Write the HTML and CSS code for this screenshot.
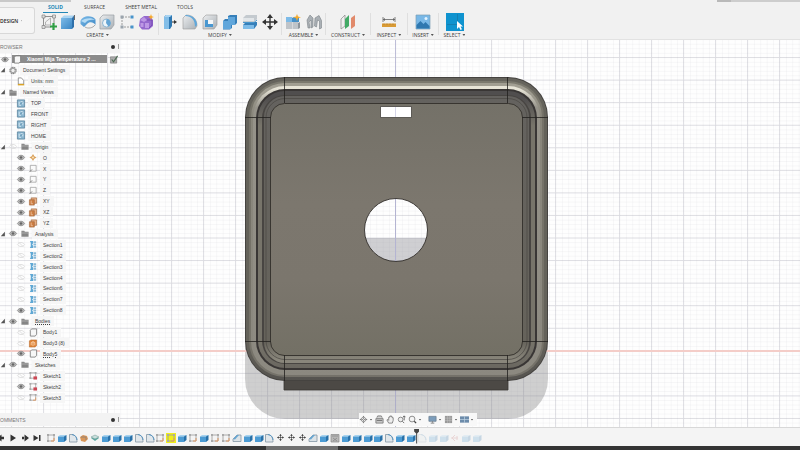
FILE: index.html
```html
<!DOCTYPE html>
<html lang="en">
<head>
<meta charset="utf-8">
<title>Xiaomi Mija Temperature 2</title>
<link rel="stylesheet" href="styles.css">
</head>
<body>
<svg class="defs" aria-hidden="true">
  <defs>
    <linearGradient id="blue" x1="0" y1="0" x2="1" y2="1"><stop offset="0" stop-color="#7dbbe8"/><stop offset="1" stop-color="#3b86c4"/></linearGradient>
    <linearGradient id="grey" x1="0" y1="0" x2="1" y2="1"><stop offset="0" stop-color="#eceef0"/><stop offset="1" stop-color="#a9afb4"/></linearGradient>
  </defs>
  <!-- ribbon -->
  <symbol id="r-sketch" viewBox="0 0 16 16"><path d="M2 2.500h11M2.500 2v11M2 13h8M13 3v6" fill="none" stroke="#777" stroke-width=".8"/><path d="M4.500 11V8l5-4v7z" fill="none" stroke="#999" stroke-width=".7"/><path d="M1 1h3v3H1zM11.500 1h3v3h-3zM1 11.500h3v3H1z" fill="#ddd" stroke="#777" stroke-width=".6"/><path d="M12.500 9v7M9 12.500h7" stroke="#2f9e44" stroke-width="2.200"/></symbol>
  <symbol id="r-extrude" viewBox="0 0 16 16"><path d="M1 4l3-2.500h10L12 4z" fill="#a9d4f2"/><path d="M12 4l2-2.500V13l-2 2z" fill="#2f70aa"/><path d="M1 4h11v11H1z" fill="url(#blue)"/><path d="M14.500 1v5" stroke="#444" stroke-width=".8"/></symbol>
  <symbol id="r-revolve" viewBox="0 0 16 16"><path d="M.5 7C2 1.500 12 .500 15.500 5.500V11c-2-3.500-6-3.500-8-1.500L4 13 .5 10z" fill="url(#blue)"/><path d="M1 7c3-3 11-4 14-1-4-1-8 0-10 3z" fill="#b4dbf5"/><path d="M5 13c3 2 8 1 10-2" fill="none" stroke="#888" stroke-width=".7"/></symbol>
  <symbol id="r-hole" viewBox="0 0 16 16"><path d="M1 4l3-3h11v10l-3 4H1z" fill="url(#grey)" stroke="#9a9fa3" stroke-width=".7"/><circle cx="7.500" cy="9" r="4" fill="#edf5fa" stroke="#78a9cb" stroke-width=".8"/><path d="M7.500 5a4 4 0 0 1 2 7.500L7 9z" fill="#63a4d4"/></symbol>
  <symbol id="r-pattern" viewBox="0 0 16 16"><path d="M3 3h10M3 3v10h10" fill="none" stroke="#888" stroke-width=".8" stroke-dasharray="2 1"/><path d="M1.500 1.500h3v3h-3zM1.500 11.500h3v3h-3z" fill="#9aa4ad"/><path d="M11.500 1.500h3v3h-3zM11.500 11.500h3v3h-3z" fill="#4794cc"/></symbol>
  <symbol id="r-form" viewBox="0 0 16 16"><path d="M2 5l4-3h6l3 4v6l-4 3.500H4L1 12z" fill="#9569ce"/><path d="M2 6l4-3 3 3-3 2zM2.500 9h3v4h-3zM7 9h4v5H7z" fill="#bd98e5"/><path d="M9 6h5v5l-3 3" fill="none" stroke="#6f43aa" stroke-width=".7"/><path d="M13 0l.8 2.200L16 3l-2.200.8L13 6l-.8-2.200L10 3l2.200-.8z" fill="#f7a928"/></symbol>
  <symbol id="r-press" viewBox="0 0 16 16"><path d="M2 3l2-2h6v11l-2 3H2z" fill="#2e78b3"/><path d="M2 3h5v12H2z" fill="#83bee8"/><path d="M2 3l2-2h6L8 3z" fill="#a9d4f2"/><path d="M10 8h3" stroke="#333"/><path d="M12 6l3 2-3 2z" fill="#333"/></symbol>
  <symbol id="r-fillet" viewBox="0 0 16 16"><path d="M1 4l3-3c7 0 11 4 11 11l-2 3H1z" fill="url(#grey)" stroke="#999" stroke-width=".6"/><path d="M3 2c7 0 10 4 10 11l2-2C15 5 10 1 4 1z" fill="#5ea7db"/></symbol>
  <symbol id="r-shell" viewBox="0 0 16 16"><path d="M1 4l3-3h11v10l-3 4H1z" fill="url(#grey)" stroke="#999" stroke-width=".6"/><path d="M3 6h8v7H3z" fill="#f4f7f9"/><path d="M3 6h3v4h5v3H3z" fill="#4997d0"/></symbol>
  <symbol id="r-combine" viewBox="0 0 16 16"><path d="M6 2l2-1h7v8l-2 2h-3v3l-2 1.500H1V7l2-2h3z" fill="#367fb9"/><path d="M6 3h7v8H9v4H1V7h5z" fill="#60a6db"/></symbol>
  <symbol id="r-split" viewBox="0 0 16 16"><path d="M1 4l3-3h11v4l-3 3H1z" fill="#c4cacf"/><path d="M1 4h11v3H1z" fill="#e2e6e9"/><path d="M1 11l3-3h11v3l-3 4H1z" fill="#367fb9"/><path d="M1 11h11v4H1z" fill="#7dbbe8"/><path d="M1 8.500h11l3-2.500" fill="none" stroke="#4896cd"/></symbol>
  <symbol id="r-move" viewBox="0 0 16 16"><path d="M8 2v12M2 8h12" stroke="#333" stroke-width="1.400"/><path d="M8 0l3 4H5zM8 16l3-4H5zM0 8l4-3v6zM16 8l-4-3v6z" fill="#333"/></symbol>
  <symbol id="r-component" viewBox="0 0 16 16"><path d="M1 3h6v5H1z" fill="#7dbbe8"/><path d="M1 8h6v7H1zM7.500 8H13v7H7.500z" fill="#bfc4c9"/><path d="M7 4l2-1h5v5H7z" fill="#4691c9"/><path d="M13 9l2-1v6l-2 1z" fill="#8e959b"/><path d="M12 0l1 2.500 3 .8-3 1L12 7l-1-2.700-3-1 3-.8z" fill="#f5ab2e"/></symbol>
  <symbol id="r-joint" viewBox="0 0 16 16"><path d="M2 14L1 6l3-5 3 3v9l-2 1V6L3 8l1 6zM9 4l4-2.500 2.500 5V14l-2 1V7l-2-1-1 7-2-1z" fill="#aab0b5" stroke="#7c8388" stroke-width=".6"/></symbol>
  <symbol id="r-construct" viewBox="0 0 16 16"><path d="M1 5l4-4v11l-4 3z" fill="#f0f0f0" stroke="#888" stroke-width=".7"/><path d="M5 5l4-4v11l-4 3z" fill="#43aa66"/><path d="M11 4l4-3v11l-4 3z" fill="#e18a6b"/></symbol>
  <symbol id="r-inspect" viewBox="0 0 16 16"><path d="M2 3v5M14 3v5M2 5.500h12" stroke="#666" stroke-width=".8"/><path d="M2 5.500l2-1.500v3zM14 5.500l-2-1.500v3z" fill="#666"/><path d="M1 9.500h14V13H1z" fill="#d99b35"/><path d="M3 9.500v1.500M6 9.500v1.500M9 9.500v1.500M12 9.500v1.500" stroke="#b07a25" stroke-width=".6"/></symbol>
  <symbol id="r-insert" viewBox="0 0 16 16"><path d="M1 1h14v14H1z" fill="#79b8e7" stroke="#7d9db4" stroke-width=".7"/><path d="M1.500 11l4-4 3 3 2-2 4 4v2.500h-13z" fill="#2f78b0"/><circle cx="11" cy="4.500" r="1.500" fill="#e4f4ff"/></symbol>
  <symbol id="r-select" viewBox="0 0 18 18"><path d="M0 0h18v18H0z" fill="#0f93cf"/><path d="M1 11.500h10M11.500 1v8" stroke="#1877a3" stroke-width=".7"/><path d="M11 8v8l2-2 1.500 3 1.500-.8-1.500-2.700H17z" fill="#fff"/></symbol>
  <!-- tree -->
  <symbol id="eye" viewBox="0 0 10 10"><path d="M1 5c2-3.300 6-3.300 8 0-2 3.300-6 3.300-8 0z" fill="#b9b9b9" stroke="#888" stroke-width=".9"/><circle cx="5" cy="5" r="1.500" fill="#666"/></symbol>
  <symbol id="eye-off" viewBox="0 0 10 10"><path d="M1 5c2-3 6-3 8 0-2 3-6 3-8 0zM2 2l6 6" fill="none" stroke="#dadada" stroke-width=".9"/></symbol>
  <symbol id="caret" viewBox="0 0 6 8"><path d="M5.500 1v6H0z" fill="#555"/></symbol>
  <symbol id="gear" viewBox="0 0 10 10"><circle cx="5" cy="5" r="3.400" fill="none" stroke="#777" stroke-width="1.300" stroke-dasharray="1.600 .5"/><circle cx="5" cy="5" r="2.400" fill="#eee" stroke="#888" stroke-width=".8"/></symbol>
  <symbol id="units" viewBox="0 0 10 10"><path d="M2 8V1h3.500L8 4v4z" fill="#fff" stroke="#777" stroke-width=".8"/><path d="M1.500 8.500h7" stroke="#d9a326" stroke-width="1.600"/></symbol>
  <symbol id="folder" viewBox="0 0 10 10"><path d="M1 2h3l1 1h4v5.500H1z" fill="#8b8b8b"/><path d="M1 4.500h8" stroke="#c9c9c9" stroke-width=".6"/><path d="M3 5v3M5 5v3M7 5v3" stroke="#777" stroke-width=".5"/></symbol>
  <symbol id="view" viewBox="0 0 10 10"><path d="M1 1h8v8H1z" fill="#8bb6d0" stroke="#527c97" stroke-width=".8"/><path d="M3 3v4h2M4.500 3H7v3" fill="none" stroke="#e3f1f9" stroke-width=".9"/><path d="M4 6l3-3" stroke="#3c6d8c" stroke-width=".6"/></symbol>
  <symbol id="point" viewBox="0 0 10 10"><path d="M5 1l1.500 2.500L9 5 6.500 6.500 5 9 3.500 6.500 1 5l2.500-1.500z" fill="#d9a15c"/><circle cx="5" cy="5" r="1.200" fill="#f8dfb7"/></symbol>
  <symbol id="axis" viewBox="0 0 10 10"><path d="M2 1.500h6.500V8H2z" fill="#fafafa" stroke="#999" stroke-width=".8"/><path d="M1 9l3-3" stroke="#777"/></symbol>
  <symbol id="plane" viewBox="0 0 10 10"><path d="M3 1h6v6H3z" fill="#e8b188" stroke="#9b6339" stroke-width=".7"/><path d="M1 3h5.500v6H1z" fill="#cd7e43" stroke="#9b6339" stroke-width=".6"/><path d="M3 4v3.500h2" fill="none" stroke="#f5d2b5" stroke-width=".7"/></symbol>
  <symbol id="section" viewBox="0 0 10 10"><path d="M1.500 1H5v3L4 5l1 1v3H1.500l1-2V3z" fill="#5ea8d5"/><path d="M5.500 1.500h3v2h-3zM5.500 4.200h3v1.600h-3zM5.500 6.500h3v2h-3z" fill="#8bb9d6"/></symbol>
  <symbol id="body" viewBox="0 0 10 10"><path d="M2 2.500L3.500 1H9v6L7.500 9H2z" fill="#f7f7f7" stroke="#777" stroke-width=".9"/></symbol>
  <symbol id="mesh" viewBox="0 0 10 10"><path d="M1 2l2-1h6v6L7.500 9H1z" fill="#de8437" stroke="#a95716" stroke-width=".5"/><path d="M3 7V4l2-1 2 1v3M5 3v5" fill="none" stroke="#ffe2c6" stroke-width=".8"/></symbol>
  <symbol id="sketch" viewBox="0 0 10 10"><path d="M2 2h6v6H2z" fill="none" stroke="#999" stroke-width=".8"/><path d="M1 1h2v2H1zM7 1h2v2H7zM1 7h2v2H1z" fill="#aaa"/><path d="M8 5v3H5" fill="none" stroke="#e09a65"/></symbol>
  <symbol id="sketch-lock" viewBox="0 0 10 10"><path d="M2 2h6v6H2z" fill="none" stroke="#999" stroke-width=".8"/><path d="M1 1h2v2H1zM7 1h2v2H7zM1 7h2v2H1z" fill="#aaa"/><path d="M5.500 6h4v3.500h-4z" fill="#cc4855"/></symbol>
  <symbol id="check" viewBox="0 0 10 10"><path d="M1 2h7v7H1z" fill="#aaa" stroke="#777" stroke-width=".7"/><path d="M2.500 5l2 2.500L9 1" fill="none" stroke="#4d6b54" stroke-width="1.300"/></symbol>
  <!-- timeline -->
  <symbol id="t-ext" viewBox="0 0 10 10"><path d="M1 3.500L3 2h6.500L7.500 3.500z" fill="#a6d3f0"/><path d="M7 3.500L9.500 2v5L7 9z" fill="#2770a8"/><path d="M1 3.500h6V9H1z" fill="#4c9bd3"/></symbol>
  <symbol id="t-fil" viewBox="0 0 10 10"><path d="M1.500 9V1.500H4C7 2 9 4 9 9z" fill="#e1e7eb" stroke="#8395a3" stroke-width=".8"/><path d="M4 1.500C7 2 9 4 9 7" fill="none" stroke="#5895c2"/></symbol>
  <symbol id="t-cha" viewBox="0 0 10 10"><path d="M1 8.500V6l4-4h4v6.500z" fill="#dce3e7" stroke="#8395a3" stroke-width=".8"/><path d="M1 6l4-4h2L3 6.500z" fill="#65a6d3"/></symbol>
  <symbol id="t-ball" viewBox="0 0 10 10"><path d="M1 4l3-2 4 1 1 3-3 3-4-1z" fill="#d99658"/><path d="M2 4h5v3" fill="none" stroke="#89817b" stroke-width=".8"/></symbol>
  <symbol id="t-plane" viewBox="0 0 10 10"><path d="M1 5l4-2 4 2-4 3z" fill="#5ba8a0"/><path d="M1 4l4-2 4 2-4 2z" fill="#c9dfdc" stroke="#6c9490" stroke-width=".5"/></symbol>
  <symbol id="t-box" viewBox="0 0 10 10"><path d="M1 1.500h8v7.500H1z" fill="#b8b8b8" stroke="#888" stroke-width=".7"/><path d="M2 3h6M3 5l4 3M3 8l4-3" stroke="#777" stroke-width=".6"/></symbol>
  <symbol id="t-red" viewBox="0 0 10 10"><path d="M1 5h7M5 2L2 5l3 3M7 3v4" fill="none" stroke="#c56d6d"/></symbol>
  <symbol id="t-play" viewBox="0 0 10 10"><path d="M2.500 1.500v7L8 5z" fill="#333"/></symbol>
  <symbol id="t-next" viewBox="0 0 10 10"><path d="M4.500 1.500v7L9 5zM2 3.700h3v2.600H2z" fill="#333"/></symbol>
  <symbol id="t-prev" viewBox="0 0 10 10"><path d="M5.500 1.500v7L1 5zM5 3.700h3v2.600H5z" fill="#333"/></symbol>
  <symbol id="t-end" viewBox="0 0 10 10"><path d="M1.500 2v6L6.500 5zM7 2h1.500v6H7z" fill="#333"/></symbol>
  <!-- view controls -->
  <symbol id="n-orbit" viewBox="0 0 10 10"><path d="M5 1v8M1 5h8" stroke="#777" stroke-width=".7"/><path d="M5 1.500L8.500 5 5 8.500 1.500 5z" fill="none" stroke="#666" stroke-width=".8"/><circle cx="5" cy="5" r="1" fill="#fff" stroke="#555" stroke-width=".6"/></symbol>
  <symbol id="n-look" viewBox="0 0 10 10"><path d="M2 3l1-2h4l1 2M1 4h8v5H1z" fill="#c7c7c7" stroke="#777" stroke-width=".9"/><path d="M2 6h6" stroke="#666"/></symbol>
  <symbol id="n-pan" viewBox="0 0 10 10"><path d="M3 9L1 5.500l1-.5 1 1V2.500h1V1.500h1V1h1v1h1v1h1V6L7 9z" fill="#eee" stroke="#666" stroke-width=".8"/></symbol>
  <symbol id="n-zoom" viewBox="0 0 10 10"><circle cx="4" cy="5" r="2.600" fill="#eee" stroke="#666" stroke-width=".8"/><path d="M6 7l2 2M8 1v5M6.500 2.500L8 1l1.500 1.500" fill="none" stroke="#555" stroke-width=".9"/></symbol>
  <symbol id="n-fit" viewBox="0 0 10 10"><circle cx="4.500" cy="4.500" r="3.200" fill="#f4f4f4" stroke="#666" stroke-width=".8"/><path d="M7 7l2 2" stroke="#444" stroke-width="1.400"/></symbol>
  <symbol id="n-display" viewBox="0 0 10 10"><path d="M1 1.500h8V7H1z" fill="#7c9dbb" stroke="#6b7f90" stroke-width=".8"/><path d="M5 7v1.500M3 9h4" stroke="#777"/></symbol>
  <symbol id="n-grid" viewBox="0 0 10 10"><path d="M1 1h8v8H1z" fill="#999"/><path d="M1 3.500h8M1 6h8M4 1v8M6.500 1v8" stroke="#c9c9c9" stroke-width=".5"/></symbol>
  <symbol id="n-port" viewBox="0 0 10 10"><path d="M0 1.500h10v7H0z" fill="#6d8cab"/><path d="M5 1.500v7M0 5h10" stroke="#c8dae8" stroke-width=".7"/></symbol>
</svg>

<div class="app">
  <header class="top">
    <button class="workspace-switch"><span>DESIGN</span><i class="drop"></i></button>
    <div class="ribbon">
      <nav class="tabs">
        <a href="#solid" class="tab tab-active">SOLID</a>
        <a href="#surface" class="tab tab-surface">SURFACE</a>
        <a href="#sheet" class="tab tab-sheet">SHEET METAL</a>
        <a href="#tools" class="tab">TOOLS</a>
      </nav>
      <div class="groups">
        <section class="group create">
          <div class="tools"><svg><use href="#r-sketch"/></svg><svg><use href="#r-extrude"/></svg><svg><use href="#r-revolve"/></svg><svg><use href="#r-hole"/></svg><svg><use href="#r-pattern"/></svg><svg><use href="#r-form"/></svg></div>
          <button class="menu">CREATE<i class="drop"></i></button>
        </section>
        <section class="group modify">
          <div class="tools"><svg><use href="#r-press"/></svg><svg><use href="#r-fillet"/></svg><svg><use href="#r-shell"/></svg><svg><use href="#r-combine"/></svg><svg><use href="#r-split"/></svg><svg><use href="#r-move"/></svg></div>
          <button class="menu">MODIFY<i class="drop"></i></button>
        </section>
        <section class="group assemble">
          <div class="tools"><svg><use href="#r-component"/></svg><svg><use href="#r-joint"/></svg></div>
          <button class="menu">ASSEMBLE<i class="drop"></i></button>
        </section>
        <section class="group construct">
          <div class="tools"><svg><use href="#r-construct"/></svg></div>
          <button class="menu">CONSTRUCT<i class="drop"></i></button>
        </section>
        <section class="group inspect">
          <div class="tools"><svg><use href="#r-inspect"/></svg></div>
          <button class="menu">INSPECT<i class="drop"></i></button>
        </section>
        <section class="group insert">
          <div class="tools"><svg><use href="#r-insert"/></svg></div>
          <button class="menu">INSERT<i class="drop"></i></button>
        </section>
        <section class="group select">
          <div class="tools"><svg><use href="#r-select"/></svg></div>
          <button class="menu">SELECT<i class="drop"></i></button>
        </section>
      </div>
    </div>
  </header>

  <main class="stage">
    <svg class="canvas" viewBox="0 40 800 387" preserveAspectRatio="xMidYMin slice">
      <defs>
        <pattern id="minor" x="11.500" y="57.300" width="6.400" height="4.510" patternUnits="userSpaceOnUse"><path d="M0 0h6.400M0 0v4.510" stroke="#9999a8" stroke-opacity=".16" stroke-width=".9" fill="none"/></pattern>
        <pattern id="major" x="11" y="57" width="32" height="22.560" patternUnits="userSpaceOnUse"><path d="M0 .5h32M.5 0v22.560" stroke="#77778a" stroke-opacity=".2" fill="none"/></pattern>
        <linearGradient id="floor" x1="0" y1="0" x2="0" y2="1"><stop offset="0" stop-color="#747168"/><stop offset=".4" stop-color="#7c776e"/><stop offset=".7" stop-color="#7b766d"/><stop offset="1" stop-color="#737065"/></linearGradient>
        <linearGradient id="g1" gradientUnits="userSpaceOnUse" x1="0" y1="77" x2="0" y2="381"><stop offset="0" stop-color="#66645d"/><stop offset=".13" stop-color="#64625a"/><stop offset=".87" stop-color="#64625a"/><stop offset="1" stop-color="#55534f"/></linearGradient>
        <linearGradient id="g2" gradientUnits="userSpaceOnUse" x1="0" y1="77" x2="0" y2="381"><stop offset="0" stop-color="#7c7a6f"/><stop offset=".13" stop-color="#757268"/><stop offset=".87" stop-color="#757268"/><stop offset="1" stop-color="#75726a"/></linearGradient>
        <linearGradient id="g3" gradientUnits="userSpaceOnUse" x1="0" y1="77" x2="0" y2="381"><stop offset="0" stop-color="#a19e92"/><stop offset=".04" stop-color="#a19e92"/><stop offset=".13" stop-color="#88857a"/><stop offset="1" stop-color="#8c8980"/></linearGradient>
        <linearGradient id="g4" gradientUnits="userSpaceOnUse" x1="0" y1="77" x2="0" y2="381"><stop offset="0" stop-color="#ebe8dc"/><stop offset=".04" stop-color="#e6e3d6"/><stop offset=".1" stop-color="#96938a"/><stop offset="1" stop-color="#8c8980"/></linearGradient>
        <linearGradient id="g5" gradientUnits="userSpaceOnUse" x1="0" y1="77" x2="0" y2="381"><stop offset="0" stop-color="#504e4e"/><stop offset=".07" stop-color="#504e4e"/><stop offset=".16" stop-color="#77746a"/><stop offset=".87" stop-color="#77746a"/><stop offset="1" stop-color="#64615b"/></linearGradient>
        <linearGradient id="g6" gradientUnits="userSpaceOnUse" x1="0" y1="77" x2="0" y2="381"><stop offset="0" stop-color="#64625f"/><stop offset=".87" stop-color="#66635b"/><stop offset=".93" stop-color="#89867b"/><stop offset="1" stop-color="#89867b"/></linearGradient>
      </defs>
      <rect y="40" width="800" height="387" fill="#fefefe"/>
      <path d="M245 340H548V379a40 40 0 0 1-40 40H285a40 40 0 0 1-40-40z" fill="#cfcfcf"/>
      <rect y="40" width="800" height="387" fill="url(#minor)"/>
      <rect y="40" width="800" height="387" fill="url(#major)"/>
      <rect y="350" width="800" height="2" fill="#f4cdc8"/>
      <path d="M395.500 40v387" stroke="#a6a6cf" stroke-opacity=".6"/>
      <path d="M284 379h224v11H284z" fill="#4c4945" stroke="#383532" stroke-width=".8"/>
      <rect x="245" y="77" width="303" height="304" rx="40" fill="#454340"/>
      <rect x="246" y="78" width="301" height="302" rx="39" fill="url(#g1)"/>
      <rect x="249" y="81" width="295" height="296" rx="36" fill="url(#g2)"/>
      <rect x="251" y="83" width="291" height="292" rx="34" fill="url(#g3)"/>
      <rect x="253" y="86" width="287" height="286" rx="32" fill="url(#g4)"/>
      <rect x="256" y="89" width="281" height="281" rx="29" fill="#393635"/>
      <rect x="258" y="91" width="277" height="277" rx="27" fill="url(#g5)"/>
      <rect x="262" y="95" width="269" height="269" rx="23" fill="#484542"/>
      <rect x="264" y="96" width="265" height="267" rx="21" fill="url(#g6)"/>
      <rect x="266" y="98.500" width="261" height="261" rx="19" fill="none" stroke="#4b4844" stroke-width=".7"/>
      <rect x="270.500" y="103.500" width="252" height="252" rx="14" fill="url(#floor)" stroke="#383530"/>
      <path d="M284.500 77v26M507.500 77v26M284.500 355v26M507.500 355v26M245 117.500h26M522 117.500h26M245 341.500h26M522 341.500h26" stroke="#22201e" stroke-opacity=".8"/>
      <clipPath id="bore"><circle cx="396" cy="230" r="31.500"/></clipPath>
      <g clip-path="url(#bore)">
        <path d="M364 198h64v40h-64z" fill="#fefefe"/><path d="M364 238h64v25h-64z" fill="#cfcfd2"/>
        <path d="M364 198h64v64h-64z" fill="url(#minor)"/><path d="M364 198h64v64h-64z" fill="url(#major)"/>
        <path d="M395.500 198v64" stroke="#b4b4d2"/>
      </g>
      <circle cx="396" cy="230" r="31.500" fill="none" stroke="#33302d" stroke-width=".9"/>
      <path d="M380.500 106.500h31v11h-31z" fill="#fff" stroke="#45423d" stroke-width=".8"/>
      <path d="M395.500 107v10" stroke="#d5d5e8"/>
    </svg>

    <aside class="side">
      <div class="panel-head"><span>ROWSER</span><i class="dot"></i><i class="grip"></i></div>
      <ul class="tree">
        <li class="doc"><svg><use href="#eye"/></svg><div class="doc-name"><svg><use href="#body"/></svg><b>Xiaomi Mija Temperature 2 ...</b></div><svg><use href="#check"/></svg></li>
        <li class="top-item"><svg class="caret"><use href="#caret"/></svg><svg><use href="#gear"/></svg><span>Document Settings</span></li>
        <li class="child"><svg><use href="#units"/></svg><span>Units: mm</span></li>
        <li class="top-item"><svg class="caret"><use href="#caret"/></svg><svg><use href="#folder"/></svg><span>Named Views</span></li>
        <li class="child"><svg><use href="#view"/></svg><span>TOP</span></li>
        <li class="child"><svg><use href="#view"/></svg><span>FRONT</span></li>
        <li class="child"><svg><use href="#view"/></svg><span>RIGHT</span></li>
        <li class="child"><svg><use href="#view"/></svg><span>HOME</span></li>
        <li class="top-item"><svg class="caret"><use href="#caret"/></svg><svg><use href="#eye-off"/></svg><svg><use href="#folder"/></svg><span>Origin</span></li>
        <li class="child"><svg><use href="#eye"/></svg><svg><use href="#point"/></svg><span>O</span></li>
        <li class="child"><svg><use href="#eye"/></svg><svg><use href="#axis"/></svg><span>X</span></li>
        <li class="child"><svg><use href="#eye"/></svg><svg><use href="#axis"/></svg><span>Y</span></li>
        <li class="child"><svg><use href="#eye"/></svg><svg><use href="#axis"/></svg><span>Z</span></li>
        <li class="child"><svg><use href="#eye"/></svg><svg><use href="#plane"/></svg><span>XY</span></li>
        <li class="child"><svg><use href="#eye"/></svg><svg><use href="#plane"/></svg><span>XZ</span></li>
        <li class="child"><svg><use href="#eye"/></svg><svg><use href="#plane"/></svg><span>YZ</span></li>
        <li class="top-item"><svg class="caret"><use href="#caret"/></svg><svg><use href="#eye"/></svg><svg><use href="#folder"/></svg><span>Analysis</span></li>
        <li class="child"><svg><use href="#eye-off"/></svg><svg><use href="#section"/></svg><span>Section1</span></li>
        <li class="child"><svg><use href="#eye-off"/></svg><svg><use href="#section"/></svg><span>Section2</span></li>
        <li class="child"><svg><use href="#eye-off"/></svg><svg><use href="#section"/></svg><span>Section3</span></li>
        <li class="child"><svg><use href="#eye-off"/></svg><svg><use href="#section"/></svg><span>Section4</span></li>
        <li class="child"><svg><use href="#eye-off"/></svg><svg><use href="#section"/></svg><span>Section6</span></li>
        <li class="child"><svg><use href="#eye-off"/></svg><svg><use href="#section"/></svg><span>Section7</span></li>
        <li class="child"><svg><use href="#eye"/></svg><svg><use href="#section"/></svg><span>Section8</span></li>
        <li class="top-item linked"><svg class="caret"><use href="#caret"/></svg><svg><use href="#eye"/></svg><svg><use href="#folder"/></svg><span>Bodies</span></li>
        <li class="child"><svg><use href="#eye-off"/></svg><svg><use href="#body"/></svg><span>Body1</span></li>
        <li class="child"><svg><use href="#eye-off"/></svg><svg><use href="#mesh"/></svg><span>Body3 (8)</span></li>
        <li class="child linked"><svg><use href="#eye"/></svg><svg><use href="#body"/></svg><span>Body5</span></li>
        <li class="top-item"><svg class="caret"><use href="#caret"/></svg><svg><use href="#eye"/></svg><svg><use href="#folder"/></svg><span>Sketches</span></li>
        <li class="child"><svg><use href="#eye-off"/></svg><svg><use href="#sketch-lock"/></svg><span>Sketch1</span></li>
        <li class="child"><svg><use href="#eye"/></svg><svg><use href="#sketch-lock"/></svg><span>Sketch2</span></li>
        <li class="child"><svg><use href="#eye-off"/></svg><svg><use href="#sketch"/></svg><span>Sketch3</span></li>
      </ul>
      <div class="panel-head comments"><span>OMMENTS</span><i class="dot"></i><i class="grip"></i></div>
    </aside>

    <div class="view-bar">
      <svg><use href="#n-orbit"/></svg><i class="drop"></i>
      <svg><use href="#n-look"/></svg><svg><use href="#n-pan"/></svg><svg><use href="#n-zoom"/></svg><svg><use href="#n-fit"/></svg><i class="drop drop-wide"></i>
      <svg><use href="#n-display"/></svg><i class="drop"></i>
      <svg><use href="#n-grid"/></svg><i class="drop"></i>
      <svg><use href="#n-port"/></svg><i class="drop"></i>
    </div>
  </main>

  <footer class="timeline">
    <div class="playback"><svg><use href="#t-prev"/></svg><svg><use href="#t-play"/></svg><svg><use href="#t-next"/></svg><svg><use href="#t-end"/></svg></div>
    <div class="features">
      <svg><use href="#sketch"/></svg><svg><use href="#t-ext"/></svg><svg><use href="#t-fil"/></svg><svg><use href="#t-ball"/></svg><svg><use href="#t-plane"/></svg><svg><use href="#t-ext"/></svg><svg><use href="#t-ext"/></svg><svg><use href="#t-ext"/></svg><svg><use href="#t-fil"/></svg><svg><use href="#t-fil"/></svg>
      <svg><use href="#sketch"/></svg><svg class="current"><use href="#sketch"/></svg><svg><use href="#t-ext"/></svg><svg><use href="#sketch"/></svg><svg><use href="#t-ext"/></svg><svg><use href="#sketch"/></svg><svg><use href="#sketch"/></svg><svg><use href="#t-cha"/></svg><svg><use href="#t-ext"/></svg><svg><use href="#t-ext"/></svg>
      <svg><use href="#t-fil"/></svg><svg class="small"><use href="#r-move"/></svg><svg class="small"><use href="#r-move"/></svg><svg class="small"><use href="#r-move"/></svg><svg><use href="#t-cha"/></svg><svg><use href="#t-ext"/></svg><svg><use href="#t-box"/></svg><svg><use href="#t-ext"/></svg><svg><use href="#t-ext"/></svg><svg><use href="#t-ext"/></svg>
      <svg><use href="#t-ext"/></svg><svg><use href="#t-fil"/></svg><svg><use href="#t-ext"/></svg><span class="last"><svg><use href="#t-ext"/></svg><i class="marker"></i></span><svg class="off"><use href="#t-fil"/></svg><svg class="off"><use href="#t-ext"/></svg><svg class="off"><use href="#t-ext"/></svg><svg class="off"><use href="#t-red"/></svg><svg class="off"><use href="#t-ext"/></svg><svg class="off"><use href="#t-ext"/></svg>
    </div>
  </footer>
  <div class="desk"><div class="desk-thumb"></div></div>
</div>
</body>
</html>
```

FILE: styles.css
```css
* { box-sizing: border-box; }

body {
  margin: 0;
  font: 5px/6px "Open Sans", "Liberation Sans", sans-serif;
  color: #3c3c3c;
  background: #f1f1f1;
}

.defs { position: absolute; width: 0; height: 0; }
svg { display: block; }
button { border: 0; padding: 0; background: none; font: inherit; color: inherit; }
a { color: inherit; text-decoration: none; }

.app {
  display: grid;
  grid-template-rows: 40px 1fr 19px 4px;
  height: 100vh;
  overflow: hidden;
}

.drop {
  display: inline-block;
  width: 3px;
  height: 2px;
  background: #555;
  clip-path: polygon(0 0, 100% 0, 50% 100%);
}

/* Header */
.top {
  display: flex;
  background:
    linear-gradient(#c9c9c9, #c9c9c9) 0 0 / 71px 2px no-repeat,
    linear-gradient(90deg, #b9b9b9 14px, #cdcdcd 14px) 100% 0 / 83px 2px no-repeat,
    #f1f1f1;
  border-bottom: 1px solid #e2e2e2;
}
.workspace-switch {
  display: flex;
  align-items: center;
  justify-content: flex-end;
  gap: 3px;
  width: 35px;
  height: 27px;
  margin-top: 7px;
  padding-right: 12px;
  border: 1px solid #d8d8d8;
  border-left: 0;
  border-radius: 0 3px 3px 0;
  background: #f5f5f5;
  color: #222;
  font-weight: 600;
}
.ribbon { flex: 1; margin-left: 4px; }
.tabs { display: flex; gap: 20px; height: 13px; padding: 4px 0 0 4px; }
.tab { height: 9px; }
.tab-active {
  width: 25px;
  text-align: center;
  font-weight: 700;
  color: #2287b6;
  border-bottom: 1px solid #2287b6;
  margin-right: -4px;
}
.groups { display: flex; }
.group { border-right: 1px solid #dfdfdf; height: 22px; }
.create { width: 120px; padding-right: 2px; }
.modify { width: 123px; padding: 0 1px; }
.assemble { width: 44px; }
.construct { width: 45px; }
.inspect { width: 37px; }
.insert { width: 31px; }
.select { width: 31px; border-right: 0; }
.tools {
  display: grid;
  grid-auto-flow: column;
  grid-auto-columns: 1fr;
  place-items: center;
  height: 18px;
}
.tools svg { width: 16px; height: 16px; }
.select .tools svg { width: 18px; height: 18px; }
.menu {
  display: flex;
  align-items: center;
  justify-content: center;
  gap: 2px;
  width: 100%;
  height: 8px;
  white-space: nowrap;
}

/* Stage: drawing underneath, panels on top */
.stage { display: grid; min-height: 0; overflow: hidden; }
.stage > * { grid-area: 1 / 1; }
.canvas { width: 100%; height: 100%; min-height: 0; }

.side {
  display: flex;
  flex-direction: column;
  justify-self: start;
  width: 120px;
  font-family: "Liberation Sans", sans-serif;
}
.panel-head {
  display: flex;
  align-items: center;
  gap: 3px;
  height: 13px;
  padding-right: 1px;
  background: #f3f3f3;
  color: #777;
}
.panel-head span { flex: 1; }
.comments { margin-top: auto; margin-bottom: 1px; }
.dot { width: 4px; height: 4px; border-radius: 50%; background: #333; }
.grip { width: 1px; height: 5px; background: #999; }

.tree {
  display: grid;
  grid-auto-rows: 1fr;
  height: 349px;
  margin: 1px 0 0;
  padding: 0;
  list-style: none;
}
.tree li { display: flex; align-items: center; gap: 2px; }
.tree svg { flex: none; width: 10px; height: 9px; }
.tree .caret { width: 6px; height: 6px; }
.tree span {
  padding: 2px 4px 2px 3px;
  background: #f6f6f6;
}
.child { padding-left: 16px; }
.linked span { text-decoration: underline dotted; }
.doc-name {
  display: flex;
  align-items: center;
  gap: 5px;
  width: 95px;
  height: 8px;
  background: #8b8b8b;
  color: #fff;
  white-space: nowrap;
}

.view-bar {
  place-self: end center;
  display: flex;
  align-items: center;
  gap: 2px;
  height: 13px;
  margin: 0 0 1px 35px;
  padding: 0 3px 0 0;
  background: #f8f8f8;
}
.view-bar svg { width: 9px; height: 9px; }
.view-bar .drop-wide { margin-right: 4px; }

/* Timeline */
.timeline {
  display: flex;
  align-items: center;
  padding-top: 1px;
  background: #f4f4f4;
  border-top: 1px solid #d8d8d8;
}
.playback { display: flex; gap: 2px; margin-left: -4px; }
.playback svg { width: 10px; height: 10px; }
.features {
  display: grid;
  grid-auto-flow: column;
  grid-auto-columns: 1fr;
  place-items: center;
  width: 436px;
  margin-left: 4px;
}
.features svg { width: 10px; height: 10px; }
.features .small { width: 7px; height: 7px; }
.features .current { background: #f0ee1c; }
.features .off { opacity: .22; }
.last { position: relative; }
.marker {
  position: absolute;
  left: 8px;
  top: -4px;
  width: 5px;
  height: 15px;
  background: #444;
  clip-path: polygon(0 0, 100% 0, 100% 3px, 3px 5px, 3px 100%, 2px 100%, 2px 5px, 0 3px);
}

.desk { background: #343434; padding-left: 266px; }
.desk-thumb { width: 72px; height: 4px; background: #6f6f6f; }
```
